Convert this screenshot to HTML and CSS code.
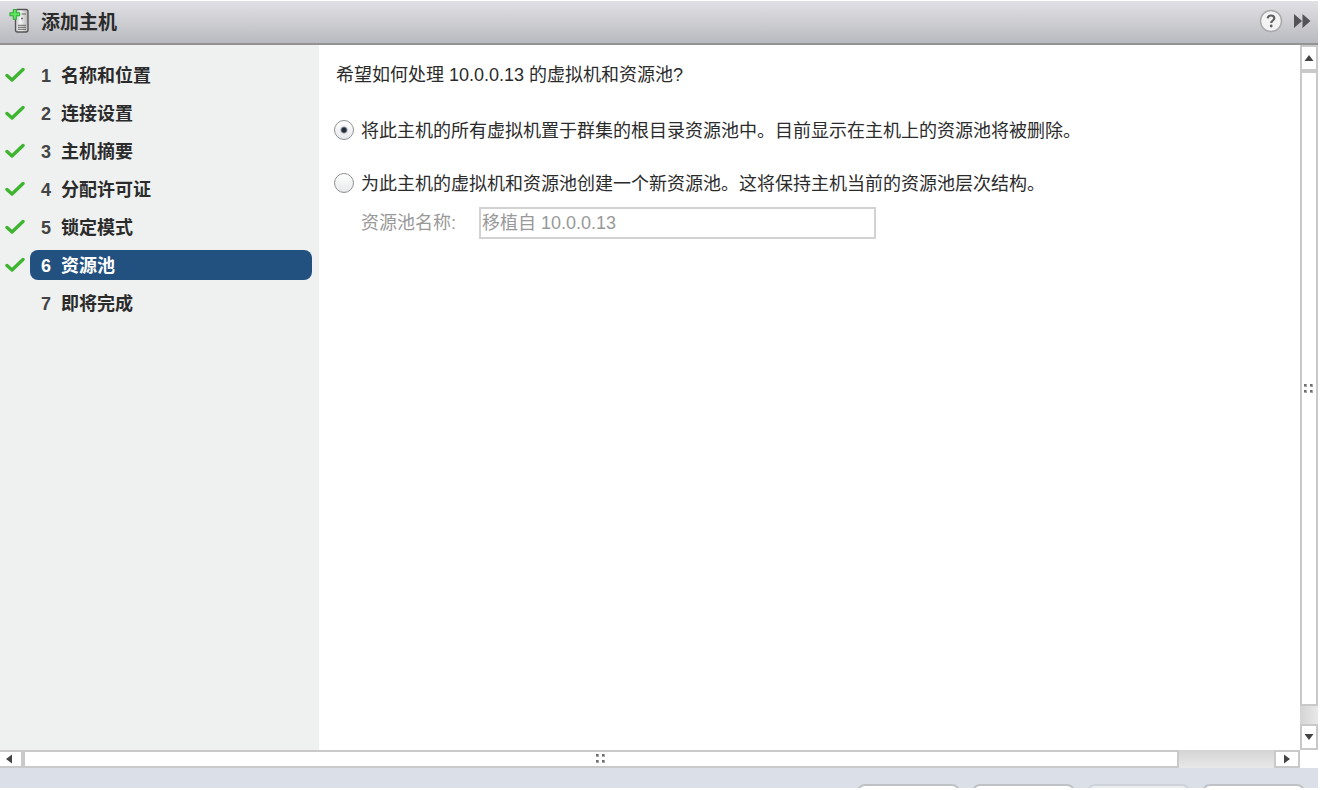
FILE: index.html
```html
<!DOCTYPE html>
<html lang="zh-CN">
<head>
<meta charset="utf-8">
<title>添加主机</title>
<link rel="stylesheet" href="styles.css">
</head>
<body>
<svg class="defs" width="0" height="0" aria-hidden="true">
  <symbol id="check" viewBox="0 0 20 16"><path d="M2 8.5 L7 13 L18 2.5" fill="none" stroke="#3eb52f" stroke-width="3.4" stroke-linecap="round" stroke-linejoin="round"/></symbol>
  <symbol id="grip" viewBox="0 0 10 10"><path d="M0 0h3v3H0zM6 0h3v3H6zM0 6h3v3H0zM6 6h3v3H6z" fill="#a5a5a5"/><path d="M0 0h2v2H0zM6 0h2v2H6zM0 6h2v2H0zM6 6h2v2H6z" fill="#6e6e6e"/></symbol>
</svg>
<div class="wizard">
  <header class="titlebar">
    <svg class="host-icon" width="22" height="26" viewBox="0 0 22 26" aria-hidden="true">
      <defs><linearGradient id="case" x1="0" x2="1"><stop offset="0" stop-color="#c9c9c9"/><stop offset=".4" stop-color="#f3f3f3"/><stop offset="1" stop-color="#b5b5b5"/></linearGradient></defs>
      <rect x="6.500" y="1.500" width="12.500" height="22.500" rx="2" fill="url(#case)" stroke="#555" stroke-width="1.300"/>
      <path d="M12.500 6h4.500M9 17.300h8M9 19.300h8M9 21.300h8" stroke="#666" stroke-width="1"/>
      <circle cx="13" cy="10.500" r="1" fill="#666"/>
      <path d="M4.300 1.500h3v3.300h3.400v3H7.300v3.400h-3V7.800H1v-3h3.300z" fill="#62e85e" stroke="#2faa38" stroke-width="1.100" stroke-linejoin="round"/>
    </svg>
    <h1>添加主机</h1>
    <button class="icon-button" aria-label="帮助">
      <svg width="24" height="24" viewBox="0 0 24 24"><circle cx="12" cy="12" r="10.500" fill="#f3f3f3" stroke="#aaa" stroke-width="1.500"/><path d="M8.700 9.300C8.900 7.300 10.200 6.500 12 6.500c2 0 3.300 1 3.300 2.700 0 2.200-3.100 2.400-3.100 4.800" fill="none" stroke="#606060" stroke-width="2.200"/><circle cx="12.200" cy="17" r="1.400" fill="#606060"/></svg>
    </button>
    <button class="icon-button" aria-label="展开">
      <svg width="18" height="16" viewBox="0 0 18 16"><path d="M1 1l8 7-8 7zM9.500 1l8 7-8 7z" fill="#545458"/></svg>
    </button>
  </header>

  <div class="body">
    <nav class="steps">
      <ol>
        <li><svg width="20" height="16" aria-hidden="true"><use href="#check"/></svg><a href="#"><span>1</span>名称和位置</a></li>
        <li><svg width="20" height="16" aria-hidden="true"><use href="#check"/></svg><a href="#"><span>2</span>连接设置</a></li>
        <li><svg width="20" height="16" aria-hidden="true"><use href="#check"/></svg><a href="#"><span>3</span>主机摘要</a></li>
        <li><svg width="20" height="16" aria-hidden="true"><use href="#check"/></svg><a href="#"><span>4</span>分配许可证</a></li>
        <li><svg width="20" height="16" aria-hidden="true"><use href="#check"/></svg><a href="#"><span>5</span>锁定模式</a></li>
        <li><svg width="20" height="16" aria-hidden="true"><use href="#check"/></svg><a class="current" aria-current="step" href="#"><span>6</span>资源池</a></li>
        <li><a href="#"><span>7</span>即将完成</a></li>
      </ol>
    </nav>
    <main class="content">
      <form>
        <p>希望如何处理 10.0.0.13 的虚拟机和资源池?</p>
        <div class="option">
          <input type="radio" name="pool" id="root" checked>
          <label for="root">将此主机的所有虚拟机置于群集的根目录资源池中。目前显示在主机上的资源池将被删除。</label>
        </div>
        <div class="option">
          <input type="radio" name="pool" id="new">
          <label for="new">为此主机的虚拟机和资源池创建一个新资源池。这将保持主机当前的资源池层次结构。</label>
        </div>
        <div class="field">
          <label for="name">资源池名称:</label>
          <input type="text" id="name" value="移植自 10.0.0.13" disabled>
        </div>
      </form>
    </main>
    <div class="scroll vertical">
      <button aria-label="向上滚动"><svg width="10" height="6" viewBox="0 0 10 6"><path d="M5 0l4.500 6h-9z" fill="#444"/></svg></button>
      <div class="thumb"><svg width="10" height="10"><use href="#grip"/></svg></div>
      <div class="track"></div>
      <button aria-label="向下滚动"><svg width="10" height="6" viewBox="0 0 10 6"><path d="M.5 0h9L5 6z" fill="#444"/></svg></button>
    </div>
  </div>

  <div class="scroll horizontal">
    <button aria-label="向左滚动"><svg width="6" height="10" viewBox="0 0 6 10"><path d="M6 .5v9L0 5z" fill="#444"/></svg></button>
    <div class="thumb"><svg width="10" height="10"><use href="#grip"/></svg></div>
    <div class="track"></div>
    <button aria-label="向右滚动"><svg width="6" height="10" viewBox="0 0 6 10"><path d="M0 .5v9L6 5z" fill="#444"/></svg></button>
  </div>

  <footer class="actions">
    <button aria-label="上一步"></button>
    <button aria-label="下一步"></button>
    <button aria-label="完成" disabled></button>
    <button aria-label="取消"></button>
  </footer>
</div>
</body>
</html>
```
FILE: styles.css
```css
* {
  box-sizing: border-box;
}

body {
  margin: 0;
  background: #fff;
  color: #2b2b2b;
  font: 18px/24px "Liberation Sans", "Noto Sans CJK SC", sans-serif;
}

.defs {
  position: absolute;
}

button {
  margin: 0;
  padding: 0;
  border: 0;
  background: none;
}

svg {
  display: block;
}

.wizard {
  display: flex;
  flex-direction: column;
  height: 100vh;
  padding: 1px 2px 2px 0;
  overflow: hidden;
}

.titlebar {
  display: flex;
  flex: none;
  align-items: center;
  gap: 10px;
  height: 44px;
  padding: 0 7px 2px 9px;
  border-bottom: 2px solid #929392;
  background: linear-gradient(#e1e1e5, #b9babf);
}

.titlebar h1 {
  flex: 1;
  margin: 0;
  padding-top: 4px;
  font-size: 19px;
  font-weight: bold;
}

.body {
  display: flex;
  flex: 1;
  min-height: 0;
}

.steps {
  flex: none;
  width: 319px;
  padding: 15px 7px 0 5px;
  background: #eff1f1;
}

.steps ol {
  display: grid;
  gap: 8px;
  margin: 0;
  padding: 0;
  list-style: none;
}

.steps li {
  display: grid;
  grid-template-columns: 25px 1fr;
  align-items: center;
}

.steps a {
  display: flex;
  grid-column: 2;
  height: 30px;
  padding: 0 11px;
  border-radius: 8px;
  color: #2b2b2b;
  font-weight: bold;
  line-height: 32px;
  text-decoration: none;
}

.steps span {
  width: 20px;
  color: #444;
}

.steps .current,
.steps .current span {
  background: #23517f;
  color: #fff;
}

.steps .current span {
  background: none;
}

.content {
  flex: 1;
  min-width: 0;
  padding: 18px 15px;
}

.content p {
  margin: 0 0 30px 2px;
}

.option {
  display: flex;
  align-items: center;
  gap: 7px;
  margin-bottom: 27px;
}

.option label {
  padding-top: 2px;
}

.option input {
  flex: none;
  appearance: none;
  width: 20px;
  height: 20px;
  margin: 0;
  border: 1px solid #8f9194;
  border-radius: 50%;
  background: linear-gradient(#fff, #e6e8e9);
}

.option input:checked {
  background: radial-gradient(circle, #222b3c 0 2px, transparent 4px), linear-gradient(#fff, #e6e8e9);
}

.field {
  display: flex;
  align-items: center;
  margin: -16px 0 0 27px;
  color: #999;
}

.field label {
  width: 118px;
}

.field input {
  width: 397px;
  height: 32px;
  padding: 0 1px 4px;
  border: 2px solid #d2d2d2;
  background: #fff;
  color: #999;
  font: inherit;
}

.scroll {
  display: flex;
  flex: none;
}

.scroll button,
.thumb {
  display: flex;
  flex: none;
  align-items: center;
  justify-content: center;
  border: 2px solid #c9c9c9;
  background: #fff;
}

.scroll .thumb {
  flex: 1;
}

.vertical {
  flex-direction: column;
  width: 18px;
}

.vertical button {
  height: 26px;
}

.vertical .track {
  height: 18px;
  background: linear-gradient(90deg, #d4d4d4, #e8e8e8);
}

.horizontal {
  height: 18px;
  margin-right: 18px;
}

.horizontal button {
  width: 26px;
}

.horizontal button:first-child {
  width: 23px;
  padding-right: 4px;
  border-left: 0;
}

.horizontal .track {
  width: 95px;
  background: linear-gradient(#d4d4d4, #e8e8e8);
}

.actions {
  display: flex;
  flex: none;
  justify-content: flex-end;
  gap: 12px;
  height: 20px;
  padding: 16px 13px 0 0;
  overflow: hidden;
  background: #dbdfe7;
}

.actions button {
  width: 103px;
  height: 30px;
  border: 2px solid #bfc2c5;
  border-radius: 8px;
  background: #fff;
}

.actions button:disabled {
  border-color: #cdd3d9;
  background: #e9edf0;
}
```
